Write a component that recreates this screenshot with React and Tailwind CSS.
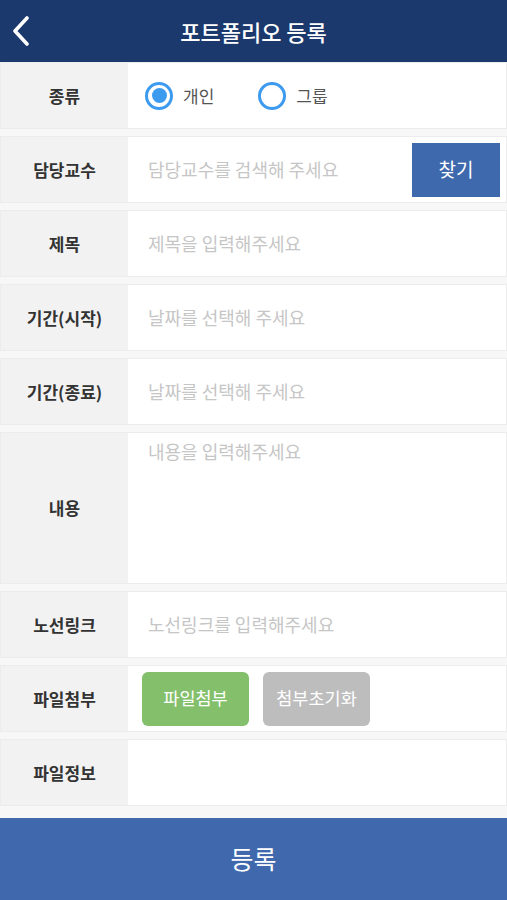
import { useState } from "react";

const font = { fontFamily: '"Noto Sans CJK KR", "Noto Sans", sans-serif' };

function Row({ label, tall, children }) {
  return (
    <div
      className={`flex bg-white border border-[#ececec] ${tall ? "h-[152px]" : "h-[67px]"}`}
    >
      <div className="w-[127px] shrink-0 bg-[#f2f2f2] flex items-center justify-center text-[17px] font-bold text-[#333]">
        {label}
      </div>
      <div className="flex-1 min-w-0">{children}</div>
    </div>
  );
}

function Placeholder({ text, top }) {
  return (
    <div
      className={`h-full flex pl-[20px] text-[18px] text-[#c6c6c6] ${top ? "items-start pt-[5px]" : "items-center"}`}
    >
      {text}
    </div>
  );
}

function Radio({ checked, label, onClick }) {
  return (
    <button onClick={onClick} className="flex items-center gap-[10px]">
      <span className="w-[28px] h-[28px] rounded-full border-[3px] border-[#3d9bef] flex items-center justify-center">
        {checked && <span className="w-[15px] h-[15px] rounded-full bg-[#3d9bef]" />}
      </span>
      <span className="text-[17px] text-[#555]">{label}</span>
    </button>
  );
}

export default function App() {
  const [type, setType] = useState("personal");

  return (
    <div style={font} className="w-[507px] h-[900px] bg-[#f7f7f7] flex flex-col overflow-hidden">
      {/* Header */}
      <div className="h-[62px] shrink-0 bg-[#1b396d] flex items-center relative">
        <button className="absolute left-[10px] top-[16px]">
          <svg width="22" height="30" viewBox="0 0 22 30" fill="none">
            <path d="M17 2 L5 15 L17 28" stroke="white" strokeWidth="3.6" strokeLinecap="round" strokeLinejoin="round" />
          </svg>
        </button>
        <h1 className="flex-1 text-center text-white text-[22px] font-medium">포트폴리오 등록</h1>
      </div>

      {/* Form */}
      <div className="flex flex-col gap-[7px]">
        <Row label="종류">
          <div className="h-full flex items-center pl-[17px] gap-[44px]">
            <Radio checked={type === "personal"} label="개인" onClick={() => setType("personal")} />
            <Radio checked={type === "group"} label="그룹" onClick={() => setType("group")} />
          </div>
        </Row>

        <Row label="담당교수">
          <div className="h-full flex items-center justify-between pr-[6px]">
            <Placeholder text="담당교수를 검색해 주세요" />
            <button className="w-[88px] h-[54px] bg-[#3f69ad] text-white text-[19px]">찾기</button>
          </div>
        </Row>

        <Row label="제목">
          <Placeholder text="제목을 입력해주세요" />
        </Row>

        <Row label="기간(시작)">
          <Placeholder text="날짜를 선택해 주세요" />
        </Row>

        <Row label="기간(종료)">
          <Placeholder text="날짜를 선택해 주세요" />
        </Row>

        <Row label="내용" tall>
          <Placeholder text="내용을 입력해주세요" top />
        </Row>

        <Row label="노선링크">
          <Placeholder text="노선링크를 입력해주세요" />
        </Row>

        <Row label="파일첨부">
          <div className="h-full flex items-center pl-[14px] gap-[14px]">
            <button className="w-[107px] h-[54px] rounded-[6px] bg-[#84c06c] text-white text-[17.5px]">파일첨부</button>
            <button className="w-[107px] h-[54px] rounded-[6px] bg-[#bdbdbd] text-white text-[17.5px]">첨부초기화</button>
          </div>
        </Row>

        <Row label="파일정보" />
      </div>

      {/* Submit */}
      <button className="mt-[12px] h-[82px] shrink-0 bg-[#4069ad] text-white text-[25px]">등록</button>
    </div>
  );
}
